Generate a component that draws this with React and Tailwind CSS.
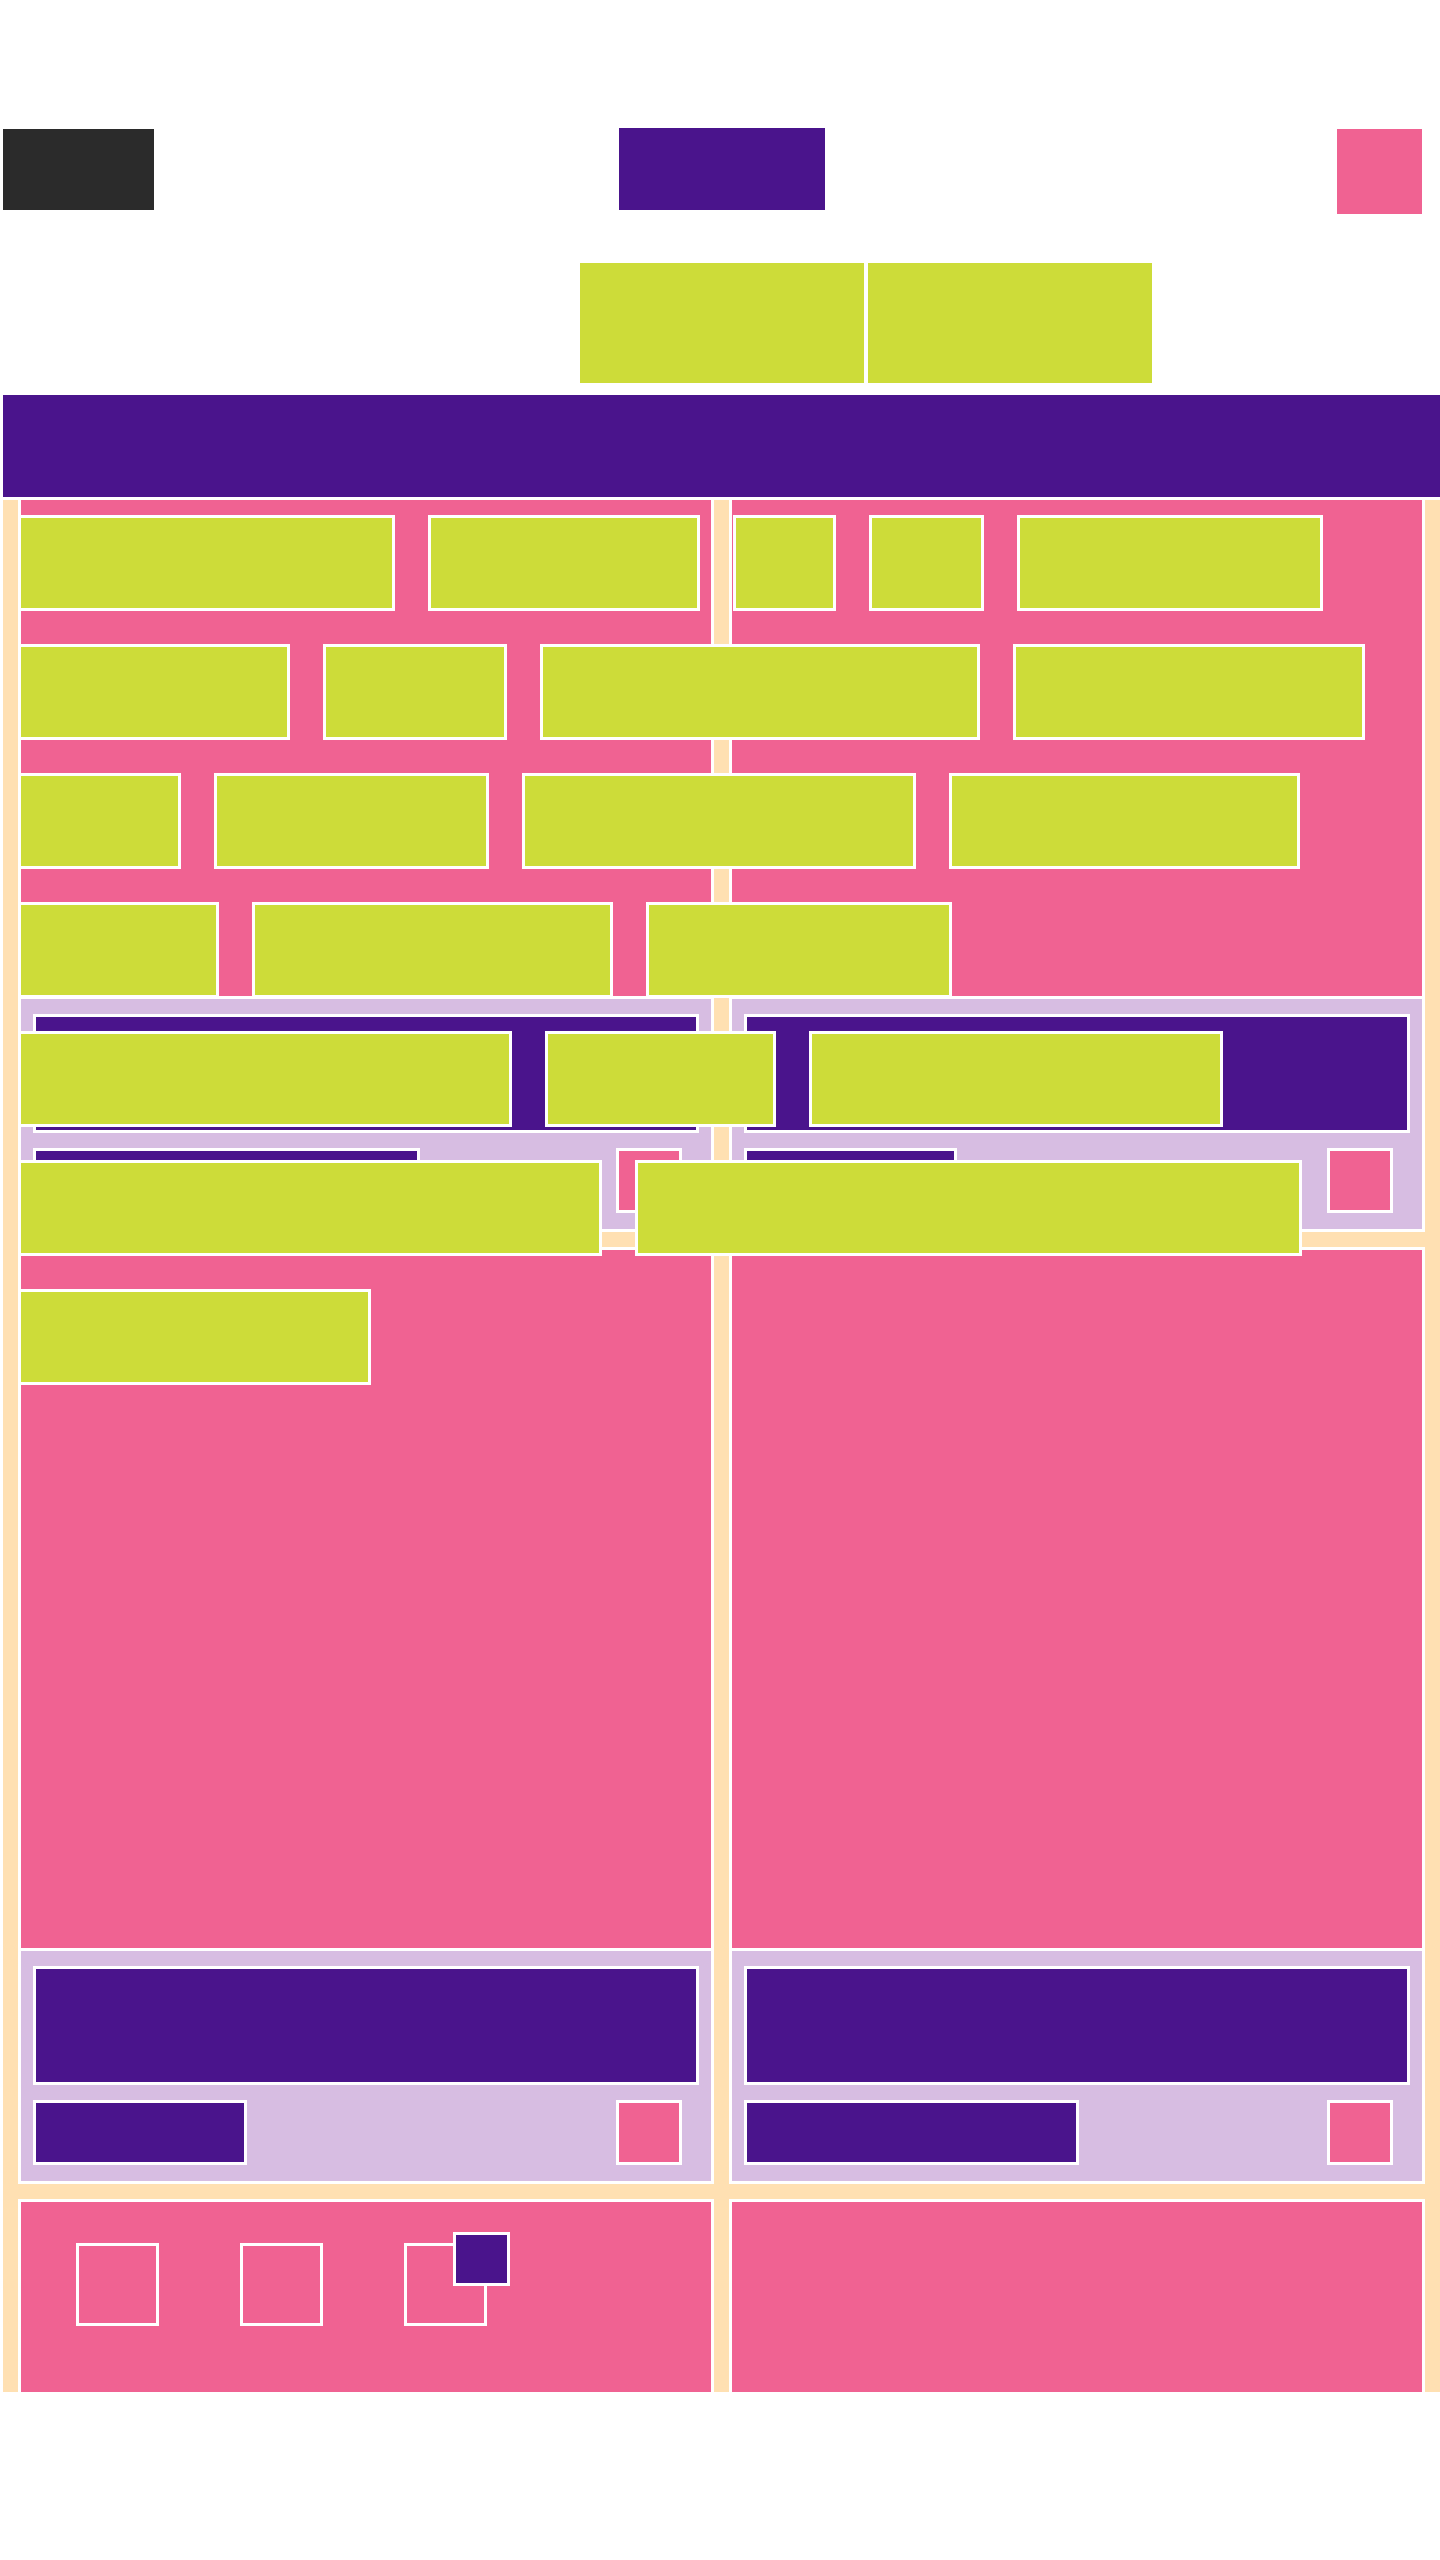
import React from 'react';

const chipRows = [
  ['w-[377px]', 'w-[272px]', 'w-[103px]', 'w-[115px]', 'w-[306px]'],
  ['w-[272px]', 'w-[184px]', 'w-[440px]', 'w-[352px]'],
  ['w-[163px]', 'w-[275px]', 'w-[394px]', 'w-[351px]'],
  ['w-[201px]', 'w-[361px]', 'w-[306px]'],
  ['w-[494px]', 'w-[231px]', 'w-[414px]'],
  ['w-[584px]', 'w-[667px]'],
  ['w-[353px]'],
];

// lilac footer under each pink panel
const Footer = ({ labelWidth }) => (
  <div className="bg-[#d7bde2] border-t-[3px] border-white h-[233px] px-[12px] pt-[15px] flex flex-col gap-[15px]">
    <div className="h-[119px] bg-[#4a148c] border-[3px] border-white" />
    <div className="flex items-start justify-between pr-[17px]">
      <div className={`h-[65px] bg-[#4a148c] border-[3px] border-white ${labelWidth}`} />
      <div className="w-[66px] h-[65px] bg-[#f06292] border-[3px] border-white" />
    </div>
  </div>
);

const Column = ({ topLabel, bottomLabel, withSquares }) => (
  <div className="flex flex-col gap-[15px] w-[696px]">
    {/* Card A */}
    <div className="border-x-[3px] border-b-[3px] border-white">
      <div className="h-[496px] bg-[#f06292]" />
      <Footer labelWidth={topLabel} />
    </div>

    {/* Card B */}
    <div className="border-[3px] border-white">
      <div className="h-[698px] bg-[#f06292]" />
      <Footer labelWidth={bottomLabel} />
    </div>

    {/* Card C */}
    <div className="border-x-[3px] border-t-[3px] border-white">
      <div className="h-[190px] bg-[#f06292] pl-[55px] pt-[41px]">
        {withSquares && (
          <div className="flex gap-[81px]">
            <div className="w-[83px] h-[83px] border-[3px] border-white" />
            <div className="w-[83px] h-[83px] border-[3px] border-white" />
            <div className="relative w-[83px] h-[83px] border-[3px] border-white">
              <div className="absolute left-[46px] -top-[14px] w-[57px] h-[54px] bg-[#4a148c] border-[3px] border-white" />
            </div>
          </div>
        )}
      </div>
    </div>
  </div>
);

export default function App() {
  return (
    <div className="min-h-screen bg-white pl-[3px] pt-[128px]">
      {/* Top bar */}
      <div className="grid grid-cols-3 items-start h-[86px]">
        <div className="mt-[1px] w-[151px] h-[81px] bg-[#2b2b2b]" />
        <div className="justify-self-center w-[206px] h-[82px] bg-[#4a148c]" />
        <div className="justify-self-end mr-[18px] mt-[1px] w-[85px] h-[85px] bg-[#f06292]" />
      </div>

      {/* Tabs */}
      <div className="mt-[49px] flex gap-[4px] pl-[577px]">
        <div className="w-[284px] h-[120px] bg-[#cddc39]" />
        <div className="w-[284px] h-[120px] bg-[#cddc39]" />
      </div>

      {/* Banner */}
      <div className="mt-[12px] h-[102px] bg-[#4a148c]" />

      {/* Main area */}
      <div className="relative h-[1895px] overflow-hidden bg-[#ffe0b2] border-t-[3px] border-white flex gap-[15px] px-[15px]">
        <Column topLabel="w-[387px]" bottomLabel="w-[214px]" withSquares />
        <Column topLabel="w-[213px]" bottomLabel="w-[335px]" />

        {/* chip overlay */}
        <div className="absolute left-[15px] top-[15px] flex flex-col gap-[33px]">
          {chipRows.map((row, i) => (
            <div key={i} className="flex gap-[33px]">
              {row.map((w, j) => (
                <div key={j} className={`h-[96px] bg-[#cddc39] border-[3px] border-white ${w}`} />
              ))}
            </div>
          ))}
        </div>
      </div>
    </div>
  );
}
